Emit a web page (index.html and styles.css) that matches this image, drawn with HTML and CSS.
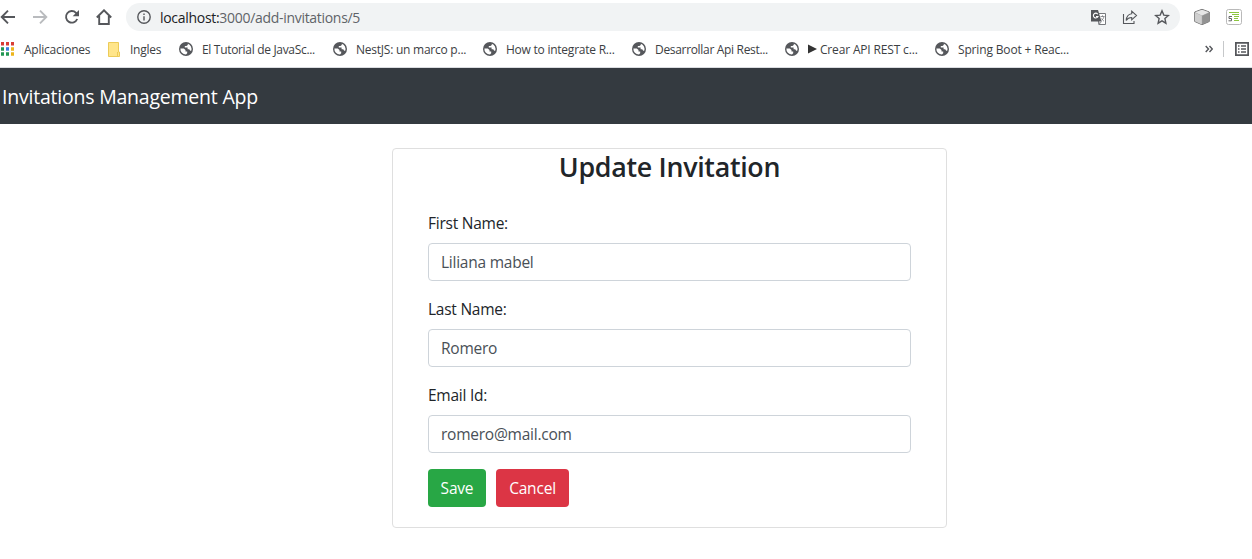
FILE: index.html
```html
<!DOCTYPE html>
<html lang="es">
<head>
<meta charset="utf-8">
<title>Invitations Management App</title>
<link rel="stylesheet" href="styles.css">
</head>
<body>
<svg class="defs" width="0" height="0">
  <symbol id="globe" viewBox="0 0 14 14">
    <circle cx="7" cy="7" r="7" fill="#55575b"/>
    <path d="M1.400 6.500h3.400l1.700 1.600v1.300h1.700v1.900L7 12.600A5.600 5.600 0 0 1 1.400 6.500Z" fill="#fff"/>
    <path d="M8.800 1.700v1.200L7.400 4H5.800v1.600h2.800v1.600h1.600l1 1.500h1A5.600 5.600 0 0 0 8.800 1.700Z" fill="#fff"/>
  </symbol>
</svg>
<header class="browser">
  <div class="toolbar">
    <nav class="controls">
      <svg width="16" height="16" viewBox="0 0 16 16"><path d="M15 8H2M8 1.700 1.700 8 8 14.300" class="line"/></svg>
      <svg width="16" height="16" viewBox="0 0 16 16"><path d="M1 8h13M8 1.700 14.300 8 8 14.300" class="line pale"/></svg>
      <svg width="16" height="16" viewBox="0 0 16 16"><path d="M13.200 10A5.800 5.800 0 1 1 12 3.800L14 6" class="line"/><path d="M15 1v6.300H8.700Z" fill="#55575b"/></svg>
      <svg width="16" height="16" viewBox="0 0 16 16"><path d="M.8 8.500 8 1.300l7.200 7.200M3.200 7v8h9.600V7" class="line"/></svg>
    </nav>
    <div class="address">
      <svg class="info" width="14" height="14" viewBox="0 0 14 14"><circle cx="7" cy="7" r="6.200" class="line thin"/><path d="M7 6.200v4.200M7 3.500V5" class="line thin"/></svg>
      <span class="url"><b>localhost:</b>3000/add-invitations/5</span>
      <div class="actions">
        <svg width="15" height="15" viewBox="0 0 15 15"><path d="M6 3.500h8.500v11H8Z" fill="#fff" stroke="#77797d"/><path d="M0 0h7l3.500 11.500H0Z" fill="#55575b"/><path d="M6.800 4.200A2.400 2.400 0 1 0 7 6.500H5" fill="none" stroke="#fff" stroke-width="1.100"/><path d="M9.500 6.500h4M11.500 5.300v1.200M13 6.500c-.5 2-1.500 3.200-2.500 4M10.500 8.500c.7 1.200 1.500 2 2.500 2.700M8 12v2.500l2.500-3" fill="none" stroke="#77797d" stroke-width=".8"/></svg>
        <svg width="16" height="16" viewBox="0 0 16 16"><path d="M1.500 5v9.500H12V12M9.700 2.200l4.800 4.300-4.800 4.300V8.500c-2.800 0-4.300 1-5.500 3 .3-4 2.200-6.300 5.500-6.700Z" class="line fine"/></svg>
        <svg width="16" height="16" viewBox="0 0 16 16"><path d="m8 1.800 1.800 4.300 4.600.4-3.500 3.100 1 4.600L8 11.800l-3.900 2.400 1-4.600-3.500-3.100 4.600-.4Z" class="line thin"/></svg>
      </div>
    </div>
    <div class="extensions">
      <svg width="18" height="18" viewBox="0 0 18 18"><path d="M9 1.300 16.300 4v9.500L9 16.700l-7.300-3.200V4Z" fill="#aaa" stroke="#777"/><path d="M2 4.300 9 1.800l7 2.500-7 3.200Z" fill="#e6e6e6"/><path d="m2 4.800 6.800 3v8.600L2 13.200Z" fill="#cfcfcf"/><path d="m9.200 7.800 6.800-3v8.400l-6.800 3.200Z" fill="#929292"/></svg>
      <svg width="16" height="16" viewBox="0 0 16 16"><rect x=".5" y=".5" width="15" height="15" rx="2" fill="#fff" stroke="#b9b9b9"/><path d="M3 3.500h10M6 5.500h7M8 7.500h5M8 9.500h4M8 11.500h5" stroke="#8cc63f" stroke-width="1.200"/><path d="M6 7.500H3v2h2.500v2.300H2.500" fill="none" stroke="#666"/></svg>
    </div>
  </div>
  <div class="bookmarks">
    <a class="bookmark"><svg width="15" height="14" viewBox="0 0 15 14"><path d="M1 0h3v3.500H1ZM6 0h3v3.500H6ZM11 0h3v3.500h-3Z" fill="#d93e35"/><path d="M1 5.200h3v3.500H1ZM1 10.300h3v3.500H1ZM6 10.300h3v3.500H6Z" fill="#239653"/><path d="M6 5.200h3v3.500H6Z" fill="#3b7de0"/><path d="M11 5.200h3v3.500h-3ZM11 10.300h3v3.500h-3Z" fill="#edb51c"/></svg><span>Aplicaciones</span></a>
    <a class="bookmark"><svg width="14" height="15" viewBox="0 0 14 15"><path d="M1.500.500h10v9.500h1v4.500h-11Z" fill="#ffe58a" stroke="#eccb58"/><path d="M10.500 10v4" stroke="#eccb58"/></svg><span>Ingles</span></a>
    <a class="bookmark tight"><svg width="14" height="14"><use href="#globe"/></svg><span>El Tutorial de JavaSc...</span></a>
    <a class="bookmark"><svg width="14" height="14"><use href="#globe"/></svg><span>NestJS: un marco p...</span></a>
    <a class="bookmark"><svg width="14" height="14"><use href="#globe"/></svg><span>How to integrate R...</span></a>
    <a class="bookmark tight"><svg width="14" height="14"><use href="#globe"/></svg><span>Desarrollar Api Rest...</span></a>
    <a class="bookmark wide"><svg width="14" height="14"><use href="#globe"/></svg><span><svg width="9" height="10" viewBox="0 0 9 10"><path d="M0 .5 9 5 0 9.500Z" fill="#333"/></svg> Crear API REST c...</span></a>
    <a class="bookmark wide"><svg width="14" height="14"><use href="#globe"/></svg><span>Spring Boot + Reac...</span></a>
    <div class="more">
      <svg width="8" height="8" viewBox="0 0 8 8"><path d="m.7 1 2.800 3L.7 7M4.500 1l2.800 3-2.800 3" class="line thin"/></svg>
      <i class="divider"></i>
      <svg width="14" height="14" viewBox="0 0 14 14"><path d="M.8.800h12.400v12.400H.8Z" class="line"/><path d="M3 4h1.500M6 4h5M3 7h1.500M6 7h5M3 10h1.500M6 10h5" class="line thin"/></svg>
    </div>
  </div>
</header>
<nav class="navbar"><a class="brand">Invitations Management App</a></nav>
<main class="page">
  <section class="card">
    <h2 class="title">Update Invitation</h2>
    <form class="form">
      <div class="group"><label for="first">First Name:</label><input id="first" class="control" value="Liliana mabel"></div>
      <div class="group"><label for="last">Last Name:</label><input id="last" class="control" value="Romero"></div>
      <div class="group"><label for="email">Email Id:</label><input id="email" class="control" value="romero@mail.com"></div>
      <div class="buttons"><button type="button" class="btn save">Save</button><button type="button" class="btn cancel">Cancel</button></div>
    </form>
  </section>
</main>
</body>
</html>
```
FILE: styles.css
```css
* { box-sizing: border-box; }
body { margin: 0; background: #fff; color: #212529; font-family: "Open Sans", "Noto Sans", sans-serif; font-size: 15.5px; overflow: hidden; }
svg { flex: none; }
.defs { display: block; position: absolute; }
.line { fill: none; stroke: #55575b; stroke-width: 1.9; }
.thin { stroke-width: 1.4; }
.fine { stroke-width: 1.1; }
.pale { stroke: #b9bbbe; }

.browser { height: 68px; border-bottom: 1px solid #dadce0; }
.toolbar { display: flex; align-items: center; height: 34px; }
.controls { display: flex; gap: 16px; width: 126px; }
.address { display: flex; align-items: center; width: 1054px; height: 28px; padding: 0 10px 0 11px; border-radius: 14px; background: #f1f3f4; }
.url { margin-left: 9px; color: #5f6368; font-size: 14px; letter-spacing: -.3px; white-space: nowrap; }
.url b { color: #202124; font-weight: 400; }
.actions { display: flex; align-items: center; gap: 16px; margin-left: auto; }
.extensions { display: flex; align-items: center; gap: 15px; margin-left: 13px; }

.bookmarks { display: grid; grid-template-columns: 107px 72px 154px 150px 149px 153px 150px 264px 1fr; align-items: center; height: 30px; }
.bookmark { display: flex; align-items: center; gap: 9px; color: #3c4043; font-size: 12px; letter-spacing: -.24px; white-space: nowrap; }
.tight { letter-spacing: -.32px; }
.wide { letter-spacing: -.16px; }
.more { display: flex; align-items: center; margin-left: 6px; }
.divider { width: 1px; height: 16px; margin: 0 11px 0 10px; background: #c6c8ca; }

.navbar { display: flex; align-items: center; height: 56px; padding: 0 2px; background: #343a40; }
.brand { color: #fff; font-size: 19.5px; letter-spacing: -.22px; line-height: 28px; padding-top: 1px; }
.page { padding: 24px 0 0 392px; }
.card { width: 555px; height: 380px; border: 1px solid #dfdfdf; border-radius: 4px; }
.title { height: 38px; margin: 0; text-align: center; font-size: 26.8px; letter-spacing: -.3px; line-height: 36px; font-weight: 600; }
.form { padding: 24px 35px 0; }
.group { height: 86px; }
.group label { display: block; height: 32px; line-height: 25px; letter-spacing: -.24px; }
.control { display: block; width: 100%; height: 38px; padding: 6px 12px; border: 1px solid #ced4da; border-radius: 4px; color: #495057; background: #fff; font: 15.5px "Open Sans", sans-serif; letter-spacing: -.24px; }
.buttons { display: flex; gap: 10px; }
.btn { height: 38px; padding: 0; border: 0; border-radius: 4px; color: #fff; font: 15.5px "Open Sans", sans-serif; letter-spacing: -.2px; }
.save { width: 58px; background: #28a745; }
.cancel { width: 73px; background: #dc3545; }
```
